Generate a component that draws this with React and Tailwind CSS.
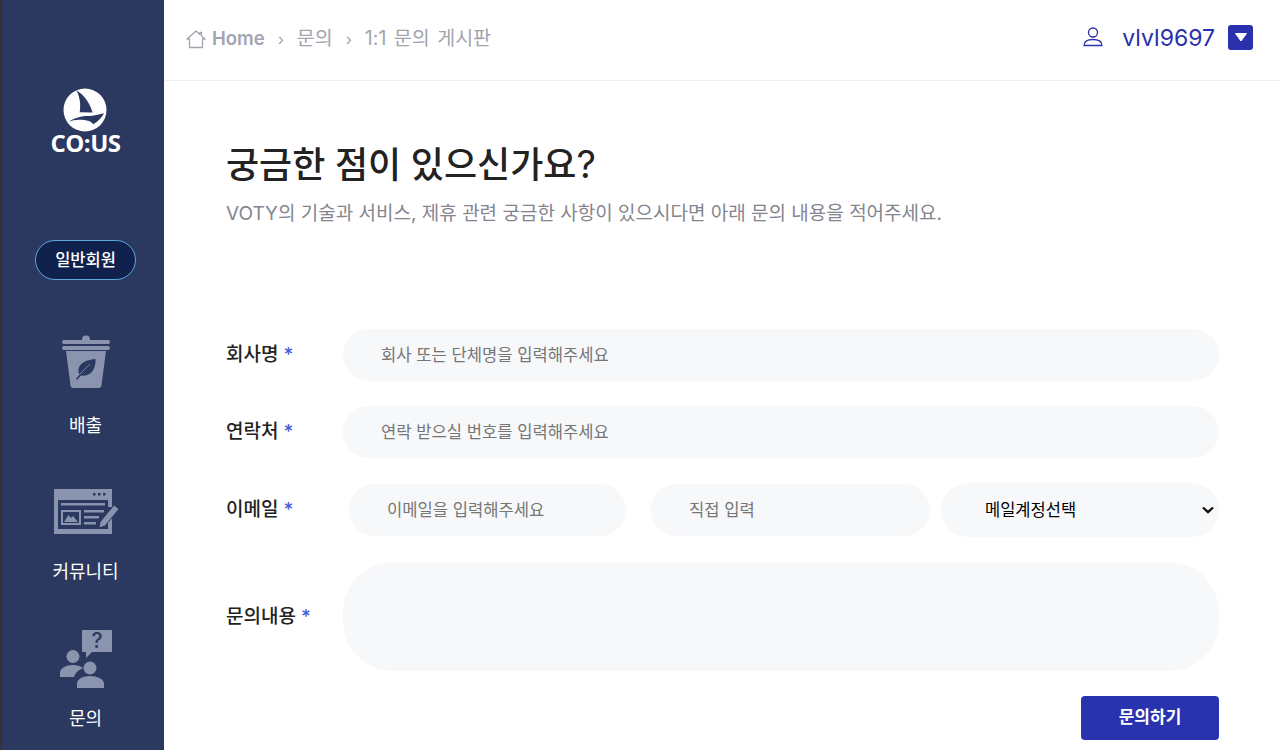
import React from "react";

const font = { fontFamily: '"Inter","Noto Sans CJK KR",sans-serif' };

function Logo() {
  return (
    <svg width="44" height="44" viewBox="0 0 44 44" className="block">
      <circle cx="22" cy="22" r="21.500" fill="#fff" />
      <path d="M13.300 2.300C21 7 27 15 29.500 24.500L16.700 24.300C18 17 17 9 13.300 2.300Z" fill="#2b3860" />
      <path d="M41 25.300C36 26.500 33 27.400 29.300 27.700C25 28 21 28 17.700 28.700C13 29.700 9 31.500 5.300 33.700C9 32.500 12 31.700 16 31.700C20 31.700 23 32 26 33C28 33.800 29.300 35 30.300 36.300C35 33.500 39 29.500 41 25.300Z" fill="#2b3860" />
    </svg>
  );
}

function TrashIcon() {
  return (
    <svg width="50" height="54" viewBox="0 0 50 54" fill="#8a94ae" className="block">
      <path d="M21 4.500a4 4 0 0 1 8 0V6H21Z" />
      <rect x="1" y="5" width="48" height="4" rx="2" />
      <rect x="1" y="11" width="48" height="4" rx="2" />
      <path d="M5 16H45L40.500 50a3 3 0 0 1-3 3H12.500a3 3 0 0 1-3-3Z" />
      <path d="M34.500 24C35 34 30 42 20 40.500L16 45L15 44L18.500 39.500C15 32 21 25 34.500 24Z" fill="#2b3860" />
      <path d="M18.500 39.500L29 29" stroke="#8a94ae" strokeWidth="0.800" fill="none" />
    </svg>
  );
}

function BoardIcon() {
  return (
    <svg width="66" height="46" viewBox="0 0 66 46" className="ml-[2px] block">
      <path d="M0 0H58V18H54V11H4V40H54V30H58V45H0Z" fill="#8a94ae" />
      <rect x="39" y="4" width="2.500" height="2.500" fill="#2b3860" />
      <rect x="44" y="4" width="2.500" height="2.500" fill="#2b3860" />
      <rect x="49" y="4" width="2.500" height="2.500" fill="#2b3860" />
      <rect x="7" y="14" width="44" height="2.500" fill="#8a94ae" />
      <rect x="7" y="21" width="20" height="15" fill="#8a94ae" />
      <rect x="9" y="23" width="16" height="11" fill="#2b3860" />
      <path d="M10 33L14.500 26L17 29L19 27L24 33Z" fill="#8a94ae" />
      <rect x="30" y="21" width="20" height="2.500" fill="#8a94ae" />
      <rect x="30" y="27" width="15" height="2.500" fill="#8a94ae" />
      <rect x="30" y="33" width="12" height="2.500" fill="#8a94ae" />
      <path d="M46 33L60 16L65 20L51 37L45 39Z" fill="#8a94ae" stroke="#2b3860" strokeWidth="1" />
    </svg>
  );
}

function InquiryIcon() {
  return (
    <svg width="52" height="58" viewBox="0 0 52 58" className="block overflow-visible">
      <path d="M22 1a1 1 0 0 1 1-1H51a1 1 0 0 1 1 1V21a1 1 0 0 1-1 1H32L26 28V22H23a1 1 0 0 1-1-1Z" fill="#8a94ae" />
      <text x="37" y="18" textAnchor="middle" fontSize="21" fontWeight="500" fill="#2b3860" fontFamily="Inter,sans-serif">?</text>
      <circle cx="13" cy="26.500" r="6.500" fill="#8a94ae" />
      <path d="M0 47V43C0 38 6 35 13 35C17 35 20 36 23 38C18 40 15 43 14 47Z" fill="#8a94ae" />
      <circle cx="30" cy="38" r="6.500" fill="#8a94ae" />
      <path d="M17 58V53.500C17 49 23 46 30 46C37 46 44 49 44 53.500V58Z" fill="#8a94ae" />
    </svg>
  );
}

function NavItem({ icon, label, boxClass, labelClass }) {
  return (
    <div className={"flex flex-col items-center " + boxClass}>
      {icon}
      <span className={"text-[18px] leading-[26px] text-white " + labelClass}>{label}</span>
    </div>
  );
}

function Label({ children, className = "" }) {
  return (
    <label className={"shrink-0 text-[19px] font-medium leading-[26px] text-[#222] " + className}>
      {children} <span className="text-[#4a5bdc]">*</span>
    </label>
  );
}

const inputClass =
  "h-[52px] rounded-[26px] bg-[#f7f8fa] pl-[38px] pr-4 text-[16.600px] text-[#222] outline-none placeholder:text-[#757575]";

export default function App() {
  return (
    <div style={font} className="flex h-[750px] w-[1281px] overflow-hidden bg-white">
      <aside className="flex w-[164px] shrink-0 flex-col items-center border-l-2 border-[#333] bg-[#2b3860] pl-[5px]">
        <div className="mt-[88px] flex flex-col items-center">
          <Logo />
          <span className="mt-[-1px] text-[24px] font-bold leading-[24px] tracking-[-0.5px] text-white" style={{ fontFamily: '"Open Sans",sans-serif' }}>
            CO:US
          </span>
        </div>
        <div className="mt-[85px] flex h-10 w-[101px] items-center justify-center rounded-[20px] border border-[#5ea5dc] bg-[#11214d] text-[16.500px] font-medium text-white">
          일반회원
        </div>
        <NavItem icon={<TrashIcon />} label="배출" boxClass="mt-[55px]" labelClass="mt-[24px]" />
        <NavItem icon={<BoardIcon />} label="커뮤니티" boxClass="mt-[50px]" labelClass="mt-[24px]" />
        <NavItem icon={<InquiryIcon />} label="문의" boxClass="mt-[45px]" labelClass="mt-[18px]" />
      </aside>

      <main className="flex min-w-0 flex-1 flex-col">
        <header className="flex h-[81px] shrink-0 items-center justify-between border-b border-[#eeeff1] pb-[4px] pl-[22px] pr-[28px]">
          <div className="mt-[2px] flex items-center text-[19.500px] text-[#a2a4af] [word-spacing:2px]">
            <svg width="20" height="20" viewBox="0 0 20 20" fill="none" stroke="#a2a4af" strokeWidth="1.300" className="mr-[6px]">
              <path d="M1 10L10 2L14 5.500V3.500H15.500V7L19 10H16.500V18.500H3.500V10Z" strokeLinejoin="round" />
            </svg>
            <span className="text-[18.500px] font-semibold">Home</span>
            <span className="mx-[13px] text-[16px]">›</span>
            <span>문의</span>
            <span className="mx-[13px] text-[16px]">›</span>
            <span>1:1 문의 게시판</span>
          </div>
          <div className="flex items-center">
            <svg width="20" height="20" viewBox="0 0 20 20" fill="none" stroke="#2b30ad" strokeWidth="1.300" className="mb-[2px]">
              <circle cx="10" cy="5.500" r="4.500" />
              <path d="M1 18.500C1 14.500 5 12.500 10 12.500C15 12.500 19 14.500 19 18.500Z" strokeLinejoin="round" />
            </svg>
            <span className="ml-[19px] text-[23px] text-[#2b30ad]">vlvl9697</span>
            <div className="mb-[2px] ml-[13px] flex h-[25px] w-[25px] items-center justify-center rounded-[3px] bg-[#2b30ad]">
              <svg width="14" height="9" viewBox="0 0 14 9"><path d="M1.500 0.500H12.500L7 8Z" fill="#fff" stroke="#fff" strokeLinejoin="round" /></svg>
            </div>
          </div>
        </header>

        <section className="flex-1 pl-[62px] pr-[62px]">
          <h1 className="mt-[60px] text-[36px] font-medium leading-[48px] text-[#222]">
            궁금한 점이 있으신가요<span className="text-[38px] font-normal leading-none">?</span>
          </h1>
          <p className="mt-[12px] text-[19px] leading-[26px] text-[#85858f]">
            VOTY의 기술과 서비스, 제휴 관련 궁금한 사항이 있으시다면 아래 문의 내용을 적어주세요.
          </p>

          <form className="mt-[102px] flex flex-col">
            <div className="flex items-center">
              <Label className="w-[117px]">회사명</Label>
              <input className={inputClass + " flex-1"} placeholder="회사 또는 단체명을 입력해주세요" />
            </div>
            <div className="mt-[25px] flex items-center">
              <Label className="w-[117px]">연락처</Label>
              <input className={inputClass + " flex-1"} placeholder="연락 받으실 번호를 입력해주세요" />
            </div>
            <div className="mt-[25px] flex items-center">
              <Label className="w-[123px]">이메일</Label>
              <input className={inputClass + " w-[277px]"} placeholder="이메일을 입력해주세요" />
              <input className={inputClass + " ml-[25px] w-[279px]"} placeholder="직접 입력" />
              <div className="relative ml-[11px] h-[54px] w-[278px]">
                <select className="h-full w-full appearance-none rounded-[27px] bg-[#f7f8fa] pl-[44px] pr-[24px] text-[16.500px] text-black outline-none" defaultValue="">
                  <option value="">메일계정선택</option>
                </select>
                <svg width="12" height="8" viewBox="0 0 12 8" fill="none" stroke="#111" strokeWidth="2.300" className="pointer-events-none absolute right-[5px] top-[23px]">
                  <path d="M1 1.500L6 6.200L11 1.500" />
                </svg>
              </div>
            </div>
            <div className="mt-[25px] flex items-center">
              <Label className="w-[117px]">문의내용</Label>
              <textarea className="h-[109px] flex-1 resize-none rounded-[50px] bg-[#f7f8fa] outline-none" />
            </div>
            <div className="mt-[25px] flex justify-end">
              <button type="button" className="h-[44px] w-[138px] rounded-[4px] bg-[#2a33ae] text-[17px] font-semibold text-white">
                문의하기
              </button>
            </div>
          </form>
        </section>
      </main>
    </div>
  );
}
